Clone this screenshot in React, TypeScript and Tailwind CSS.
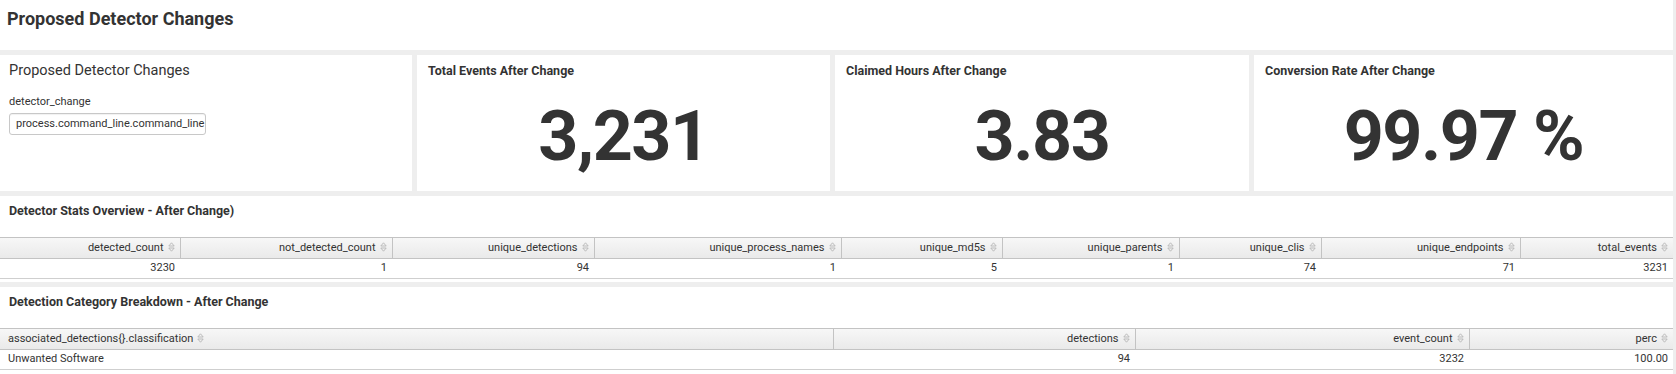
import React from "react";

function SortIcon() {
  return (
    <svg width="7" height="10" viewBox="0 0 7 10" className="inline-block ml-[4px] align-[-1px]">
      <path d="M3.5 0.8 L6.2 4 L0.8 4 Z" fill="none" stroke="#b5b5b5" strokeWidth="0.9" strokeLinejoin="round" />
      <path d="M0.8 6 L6.2 6 L3.5 9.2 Z" fill="none" stroke="#b5b5b5" strokeWidth="0.9" strokeLinejoin="round" />
    </svg>
  );
}

function SingleValue({ title, value, w }: { title: string; value: string; w: string }) {
  return (
    <div className={`bg-white flex flex-col ${w}`}>
      <div className="pt-[8px] px-[11px] text-[12.5px] leading-[16px] font-bold text-[#333]">{title}</div>
      <div className="flex-1 flex items-center justify-center pt-[2px]">
        <span className="text-[70px] leading-none font-bold text-[#333] tracking-[-1.5px]">{value}</span>
      </div>
    </div>
  );
}

const statsCols = [
  { name: "detected_count", w: 180, v: "3230" },
  { name: "not_detected_count", w: 212, v: "1" },
  { name: "unique_detections", w: 202, v: "94" },
  { name: "unique_process_names", w: 247, v: "1" },
  { name: "unique_md5s", w: 161, v: "5" },
  { name: "unique_parents", w: 177, v: "1" },
  { name: "unique_clis", w: 142, v: "74" },
  { name: "unique_endpoints", w: 199, v: "71" },
  { name: "total_events", w: 153, v: "3231" },
];

const breakCols = [
  { name: "associated_detections{}.classification", w: 833, v: "Unwanted Software", left: true },
  { name: "detections", w: 302, v: "94" },
  { name: "event_count", w: 334, v: "3232" },
  { name: "perc", w: 204, v: "100.00" },
];

function DataTable({ cols }: { cols: { name: string; w: number; v: string; left?: boolean }[] }) {
  return (
    <table className="table-fixed border-collapse w-[1673px] text-[11px] text-[#333]">
      <colgroup>
        {cols.map((c) => (
          <col key={c.name} style={{ width: c.w }} />
        ))}
      </colgroup>
      <thead>
        <tr className="bg-linear-to-b from-[#f7f7f7] to-[#e9e9e9]">
          {cols.map((c, i) => (
            <th
              key={c.name}
              className={`h-[21px] p-0 font-normal border-y border-[#c3c3c3] ${i > 0 ? "border-l" : ""} ${
                c.left ? "text-left pl-[8px]" : "text-right pr-[5px]"
              } whitespace-nowrap`}
            >
              {c.name}
              <SortIcon />
            </th>
          ))}
        </tr>
      </thead>
      <tbody>
        <tr>
          {cols.map((c) => (
            <td
              key={c.name}
              className={`h-[20px] p-0 border-b border-[#cfcfcf] ${
                c.left ? "text-left pl-[8px]" : "text-right pr-[5px]"
              } whitespace-nowrap`}
            >
              {c.v}
            </td>
          ))}
        </tr>
      </tbody>
    </table>
  );
}

export default function App() {
  return (
    <div className="w-[1676px] h-[374px] overflow-hidden bg-[#eeeeee] font-['Roboto',sans-serif] text-[#333]">
      <div className="bg-white mr-[3px] h-[50px] px-[7px] pt-[7px]">
        <h1 className="text-[18px] leading-[24px] font-bold text-[#333]">Proposed Detector Changes</h1>
      </div>

      <div className="flex gap-[5px] mt-[5px] mr-[3px] h-[136px]">
        <div className="bg-white w-[412px] px-[9px] pt-[6px]">
          <div className="text-[14.5px] leading-[20px] text-[#333]">Proposed Detector Changes</div>
          <div className="mt-[14px] text-[11px] leading-[14px] text-[#333]">detector_change</div>
          <div className="mt-[4px] w-[197px] h-[22px] border border-[#c8c8c8] rounded-[3px] bg-white shadow-[inset_0_1px_1px_rgba(0,0,0,0.06)] px-[6px] flex items-center overflow-hidden">
            <span className="text-[11px] text-[#333] whitespace-nowrap">process.command_line.command_line</span>
          </div>
        </div>
        <SingleValue title="Total Events After Change" value="3,231" w="w-[413px]" />
        <SingleValue title="Claimed Hours After Change" value="3.83" w="w-[414px]" />
        <SingleValue title="Conversion Rate After Change" value="99.97 %" w="flex-1" />
      </div>

      <div className="bg-white mt-[5px] mr-[3px] pt-[7px] pb-[3px]">
        <div className="px-[9px] text-[12.5px] leading-[16px] font-bold">Detector Stats Overview - After Change)</div>
        <div className="mt-[18px]">
          <DataTable cols={statsCols} />
        </div>
      </div>

      <div className="bg-white mt-[5px] mr-[3px] pt-[7px] pb-[10px]">
        <div className="px-[9px] text-[12.5px] leading-[16px] font-bold">Detection Category Breakdown - After Change</div>
        <div className="mt-[18px]">
          <DataTable cols={breakCols} />
        </div>
      </div>
    </div>
  );
}
